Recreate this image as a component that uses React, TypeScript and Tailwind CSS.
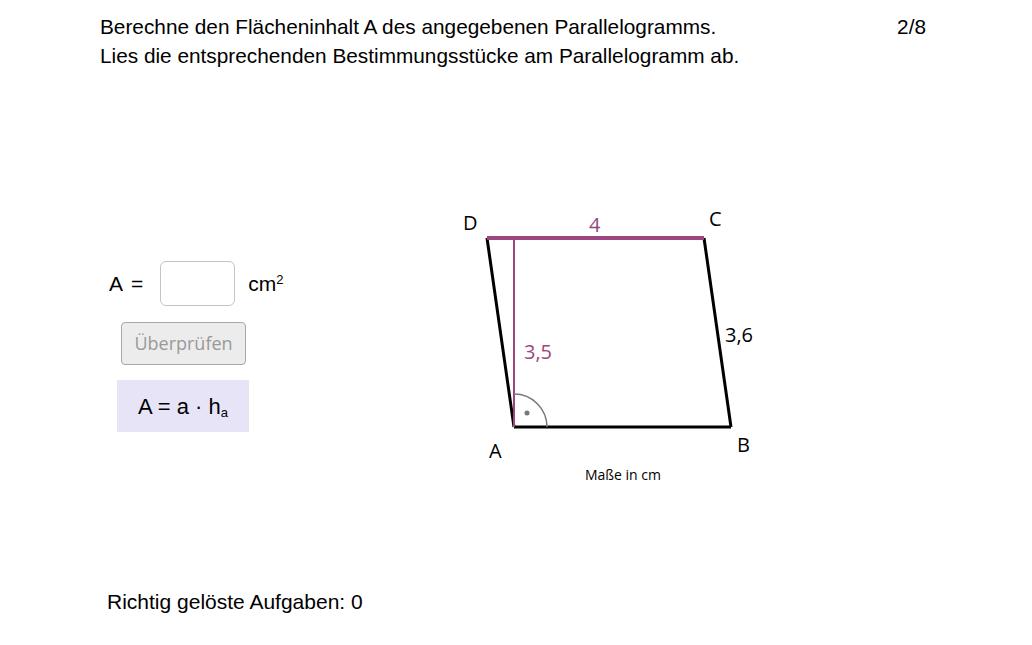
import React from 'react'

const cm = { fontFamily: '"Liberation Sans", Arial, sans-serif' }
const ui = { fontFamily: '"Open Sans", "Noto Sans", sans-serif' }

function Figure() {
  // coordinates relative to the canvas (origin at page 455,200)
  const A = [59, 227]
  const B = [276, 227]
  const C = [249, 38]
  const D = [32, 38]
  const purple = '#9c4581'
  return (
    <svg width="320" height="290" viewBox="0 0 320 290" className="shrink-0">
      <line x1={D[0]} y1={D[1]} x2={A[0]} y2={A[1]} stroke="#000" strokeWidth="3" />
      <line x1={A[0]} y1={A[1]} x2={B[0]} y2={B[1]} stroke="#000" strokeWidth="3" />
      <line x1={B[0]} y1={B[1]} x2={C[0]} y2={C[1]} stroke="#000" strokeWidth="3" />
      <line x1={59} y1={38} x2={59} y2={227} stroke={purple} strokeWidth="2" />
      <line x1={D[0]} y1={D[1]} x2={C[0]} y2={C[1]} stroke={purple} strokeWidth="4" />
      <path d="M 59 194 A 33 33 0 0 1 92 227" fill="none" stroke="#777" strokeWidth="1.5" />
      <circle cx="72" cy="213" r="2.5" fill="#777" />
      <g style={ui} fontSize="20">
        <text x="8" y="30" fill="#000">D</text>
        <text x="254" y="26" fill="#000">C</text>
        <text x="34" y="258" fill="#000">A</text>
        <text x="282" y="252" fill="#000">B</text>
        <text x="134" y="32" fill="#8c4a7d">4</text>
        <text x="69" y="159" fill={purple}>3,5</text>
        <text x="270" y="142" fill="#000">3,6</text>
        <text x="130" y="280" fontSize="14" fill="#000">Maße in cm</text>
      </g>
    </svg>
  )
}

export default function App() {
  return (
    <div className="w-[1032px] h-[645px] bg-white text-black flex flex-col overflow-hidden">
      <div className="flex justify-between pl-[100px] pr-[106px] pt-[12px] text-[20.8px] leading-[29px]" style={cm}>
        <div>
          <div>Berechne den Flächeninhalt A des angegebenen Parallelogramms.</div>
          <div>Lies die entsprechenden Bestimmungsstücke am Parallelogramm ab.</div>
        </div>
        <div>2/8</div>
      </div>

      <div className="flex mt-[130px]">
        <div className="w-[455px] shrink-0 pl-[100px] pt-[61px] flex flex-col items-start">
          <div className="flex items-center ml-[9px] text-[21px]" style={cm}>
            <span>A</span>
            <span className="ml-[8px]">=</span>
            <div className="w-[75px] h-[45px] ml-[17px] border border-[#c4c4c4] rounded-md bg-white" />
            <span className="ml-[13px]">
              cm<sup className="text-[13px]">2</sup>
            </span>
          </div>
          <button
            className="ml-[21px] mt-[16px] w-[125px] h-[43px] bg-[#ececec] border border-[#a8a8a8] rounded-[4px] text-[18px] text-[#999]"
            style={ui}
          >
            Überprüfen
          </button>
          <div className="ml-[17px] mt-[15px] w-[132px] h-[52px] bg-[#e8e4f7] flex items-center justify-center text-[22px]" style={cm}>
            <span>
              A = a · h<sub className="text-[13px]">a</sub>
            </span>
          </div>
        </div>
        <Figure />
      </div>

      <div className="mt-auto mb-[28px] pl-[107px] text-[21px]" style={cm}>
        Richtig gelöste Aufgaben: 0
      </div>
    </div>
  )
}
